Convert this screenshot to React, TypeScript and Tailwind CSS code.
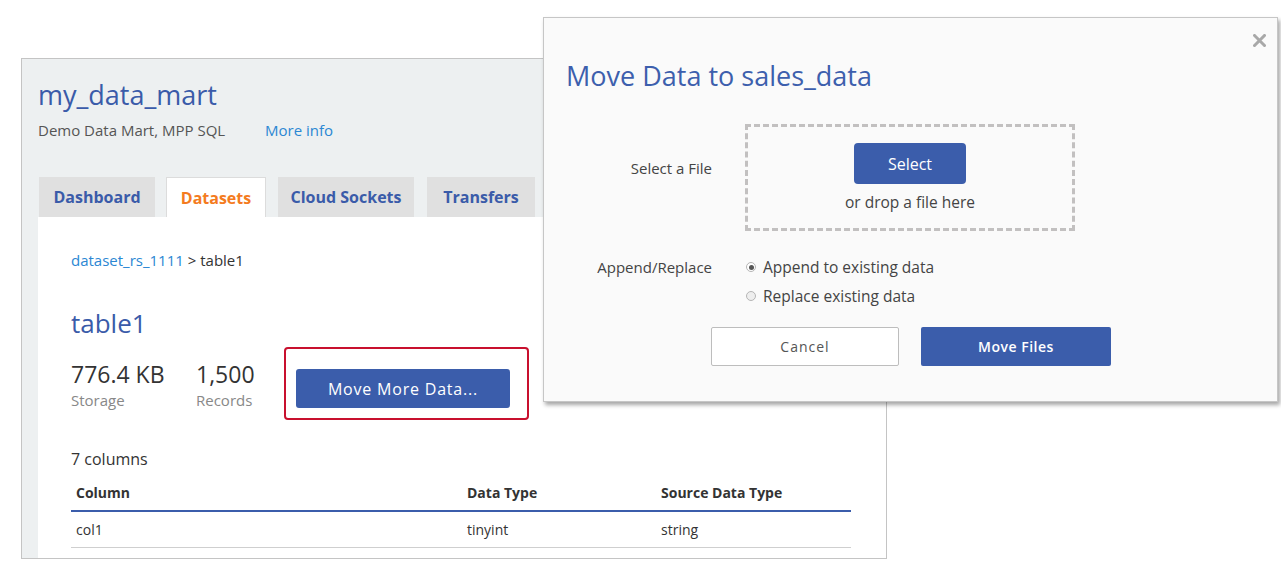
import React from 'react';

const tabs = [
  { name: 'Dashboard', cls: 'w-[116px]', active: false },
  { name: 'Datasets', cls: 'w-[100px] ml-[11px]', active: true },
  { name: 'Cloud Sockets', cls: 'w-[136px] ml-[12px]', active: false },
  { name: 'Transfers', cls: 'w-[108px] ml-[13px]', active: false },
];

const rows = [{ column: 'col1', type: 'tinyint', source: 'string' }];

const App: React.FC = () => {
  return (
    <div className="relative w-[1281px] h-[564px] overflow-hidden bg-white font-['Open_Sans',sans-serif] text-[#333]">
      {/* Data mart card */}
      <div className="ml-[21px] mt-[58px] w-[866px] h-[501px] border border-[#c4c4c4] bg-[#edf0f1] flex flex-col">
        <div className="pl-[16px] pt-[18px]">
          <h1 className="text-[27px] leading-[36px] text-[#3a5ba9]">my_data_mart</h1>
          <div className="mt-[7px] flex text-[15px] leading-[20px]">
            <span className="text-[#555] w-[227px]">Demo Data Mart, MPP SQL</span>
            <a href="#" className="text-[#2b87d3]">More info</a>
          </div>
          <div className="mt-[37px] flex pl-px">
            {tabs.map((t) => (
              <div
                key={t.name}
                className={`${t.cls} h-[40px] flex items-center justify-center text-[16px] font-bold ${
                  t.active
                    ? 'bg-white text-[#f47b20] border border-b-0 border-[#dcdcdc]'
                    : 'bg-[#e0e0e0] text-[#3a5ba9]'
                }`}
              >
                {t.name}
              </div>
            ))}
          </div>
        </div>

        <div className="ml-[16px] flex-1 bg-white pl-[33px] pt-[33px] pr-[35px]">
          <div className="text-[15px] leading-[20px]">
            <a href="#" className="text-[#2b87d3]">dataset_rs_1111</a>
            <span className="text-[#333]"> &gt; table1</span>
          </div>
          <h2 className="mt-[37px] text-[26px] leading-[32px] text-[#3a5ba9]">table1</h2>

          <div className="mt-[8px] flex items-start">
            <div className="mt-[13px] w-[125px]">
              <div className="text-[23px] leading-[28px] text-[#333]">776.4 KB</div>
              <div className="mt-[2px] text-[15px] leading-[20px] text-[#888]">Storage</div>
            </div>
            <div className="mt-[13px] w-[88px]">
              <div className="text-[23px] leading-[28px] text-[#333]">1,500</div>
              <div className="mt-[2px] text-[15px] leading-[20px] text-[#888]">Records</div>
            </div>
            <div className="w-[245px] h-[73px] border-2 border-[#c8102e] rounded-[4px] pl-[10px] pt-[20px]">
              <button className="w-[214px] h-[39px] rounded-[3px] bg-[#3b5dab] text-white text-[16px] tracking-[0.8px]">
                Move More Data...
              </button>
            </div>
          </div>

          <div className="mt-[28px] text-[16px] leading-[22px] text-[#333]">7 columns</div>
          <div className="w-[780px]">
            <div className="grid grid-cols-[391px_194px_1fr] border-b-2 border-[#3b5dab] pt-[13px] pb-[7px] text-[14px] leading-[20px] font-bold text-[#333]">
              <div className="px-[5px]">Column</div>
              <div className="px-[5px]">Data Type</div>
              <div className="px-[5px]">Source Data Type</div>
            </div>
            {rows.map((r) => (
              <div
                key={r.column}
                className="grid grid-cols-[391px_194px_1fr] border-b border-[#cfcfcf] pt-[8px] pb-[7px] text-[14px] leading-[20px] text-[#333]"
              >
                <div className="px-[5px]">{r.column}</div>
                <div className="px-[5px]">{r.type}</div>
                <div className="px-[5px]">{r.source}</div>
              </div>
            ))}
          </div>
        </div>
      </div>

      {/* Move data dialog */}
      <div className="absolute left-[543px] top-[17px] w-[735px] h-[385px] bg-[#fafafa] border border-[#c6c6c6] shadow-[2px_3px_4px_rgba(0,0,0,0.35)]">
        <button className="absolute top-[16px] right-[11px] text-[#a8a8a8]">
          <svg width="13" height="13" viewBox="0 0 13 13">
            <path d="M1.5 1.5 L11.5 11.5 M11.5 1.5 L1.5 11.5" stroke="currentColor" strokeWidth="3" strokeLinecap="square" />
          </svg>
        </button>
        <h3 className="pl-[22px] pt-[41px] text-[27px] leading-[34px] text-[#3d5fad]">
          Move Data to sales_data
        </h3>

        <div className="mt-[31px] grid grid-cols-[168px_1fr] gap-x-[33px] text-[15px] leading-[20px] text-[#444]">
          <div className="pt-[34px] text-right">Select a File</div>
          <div className="w-[330px] h-[107px] border-[3px] border-dashed border-[#c2c0c0] flex flex-col items-center pt-[16px]">
            <button className="w-[112px] h-[41px] rounded-[4px] bg-[#3b5dab] text-white text-[16px]">Select</button>
            <div className="mt-[8px] text-[15.5px]">or drop a file here</div>
          </div>

          <div className="mt-[26px] text-right">Append/Replace</div>
          <div className="mt-[26px] flex flex-col gap-[9px] text-[15.5px]">
            <label className="flex items-center gap-[7px] pl-px">
              <span className="w-[10px] h-[10px] rounded-full border border-[#b5b5b5] bg-white flex items-center justify-center">
                <span className="w-[5px] h-[5px] rounded-full bg-[#555]" />
              </span>
              Append to existing data
            </label>
            <label className="flex items-center gap-[7px] pl-px">
              <span className="w-[10px] h-[10px] rounded-full border border-[#b5b5b5] bg-[#eee]" />
              Replace existing data
            </label>
          </div>
        </div>

        <div className="mt-[21px] pl-[167px] flex gap-[22px]">
          <button className="w-[188px] h-[39px] rounded-[2px] border border-[#bdbdbd] bg-white text-[14px] font-medium text-[#555] tracking-[1px]">
            Cancel
          </button>
          <button className="w-[190px] h-[39px] rounded-[2px] bg-[#3b5dab] text-[14px] font-semibold text-white tracking-[0.5px]">
            Move Files
          </button>
        </div>
      </div>
    </div>
  );
};

export default App;
